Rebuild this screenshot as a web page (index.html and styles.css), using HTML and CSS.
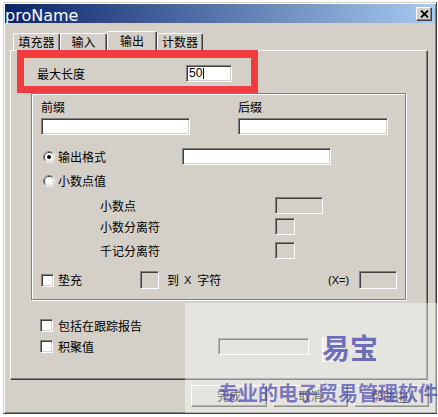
FILE: index.html
```html
<!DOCTYPE html>
<html>
<head>
<meta charset="utf-8">
<link rel="stylesheet" href="styles.css">
</head>
<body>
<div class="window">
  <div class="titlebar">
    <span class="title">proName</span>
    <span class="close"><svg width="9" height="8" viewBox="0 0 9 8"><path d="M1 0.5L8 7.5M8 0.5L1 7.5" stroke="#000" stroke-width="1.8" fill="none"/></svg></span>
  </div>
  <div class="tabs">
    <div class="tab t1">填充器</div>
    <div class="tab t2">输入</div>
    <div class="tab sel">输出</div>
    <div class="tab t4">计数器</div>
  </div>
  <div class="panel">
    <div class="redbox"></div>
    <div class="maxlen"><span class="lbl-max">最大长度</span><span class="input in-max">50<i class="caret"></i></span></div>
    <div class="group">
      <div class="fixes">
        <div class="fix fix1"><div class="fixlbl">前缀</div><div class="input in-fix1"></div></div>
        <div class="fix"><div class="fixlbl">后缀</div><div class="input in-fix2"></div></div>
      </div>
      <div class="radio-row r1">
        <span class="radio-lbl">
          <svg class="radio" viewBox="0 0 12 12" width="12" height="12"><path d="M2.11 9.89A5.5 5.5 0 0 1 9.89 2.11" fill="none" stroke="#808080"/><path d="M9.89 2.11A5.5 5.5 0 0 1 2.11 9.89" fill="none" stroke="#fff"/><path d="M2.82 9.18A4.5 4.5 0 0 1 9.18 2.82" fill="none" stroke="#404040"/><path d="M9.18 2.82A4.5 4.5 0 0 1 2.82 9.18" fill="none" stroke="#d4d0c8"/><circle cx="6" cy="6" r="4" fill="#fff"/><circle cx="6" cy="6" r="2" fill="#000"/></svg>输出格式</span>
        <span class="input in-fmt"></span>
      </div>
      <div class="radio-row r2">
        <span class="radio-lbl">
          <svg class="radio" viewBox="0 0 12 12" width="12" height="12"><path d="M2.11 9.89A5.5 5.5 0 0 1 9.89 2.11" fill="none" stroke="#808080"/><path d="M9.89 2.11A5.5 5.5 0 0 1 2.11 9.89" fill="none" stroke="#fff"/><path d="M2.82 9.18A4.5 4.5 0 0 1 9.18 2.82" fill="none" stroke="#404040"/><path d="M9.18 2.82A4.5 4.5 0 0 1 2.82 9.18" fill="none" stroke="#d4d0c8"/><circle cx="6" cy="6" r="4" fill="#fff"/></svg>小数点值</span>
      </div>
      <div class="sub s1"><span class="sublbl">小数点</span><span class="box b-wide"></span></div>
      <div class="sub s2"><span class="sublbl">小数分离符</span><span class="box b-sq"></span></div>
      <div class="sub s3"><span class="sublbl">千记分离符</span><span class="box b-sq"></span></div>
      <div class="padrow">
        <span class="chk"></span>
        <span class="padlbl">垫充</span>
        <span class="box b-pad"></span>
        <span class="tolbl"><span>到</span><span class="xch">X</span><span class="zf">字符</span></span>
        <span class="xeq">(X=)</span>
        <span class="box b-x"></span>
      </div>
    </div>
    <div class="chkrow c1"><span class="chk"></span><span class="chklbl">包括在跟踪报告</span></div>
    <div class="chkrow c2"><span class="chk"></span><span class="chklbl c2lbl">积聚值</span><span class="box b-dis"></span></div>
  </div>
  <div class="buttons">
    <div class="btn b1">完成</div>
    <div class="btn">取消</div>
    <div class="btn">帮助(<u>H</u>)</div>
  </div>
</div>
<div class="watermark">
  <div class="wm-logo"><span class="wm-btn"></span><span class="wm-big">易宝</span></div>
  <div class="wm-slogan">专业的电子贸易管理软件</div>
</div>
</body>
</html>
```
FILE: styles.css
```css
* { box-sizing: border-box; }
body {
  margin: 0;
  padding: 2px 0 0 3px;
  width: 438px;
  height: 417px;
  background: #fff;
  position: relative;
  overflow: hidden;
  font-family: "Noto Sans CJK SC", sans-serif;
  font-size: 12px;
  color: #000;
}
.window {
  width: 434px;
  height: 412px;
  background: #d4d0c8;
  border: 1px solid;
  border-color: #d4d0c8 #404040 #404040 #d4d0c8;
  box-shadow: inset 1px 1px #fff, inset -1px -1px #808080;
  padding: 1px;
  display: flex;
  flex-direction: column;
}
.titlebar {
  height: 19px;
  flex: none;
  background: linear-gradient(to right, #0a246a, #a6caf0);
  display: flex;
  justify-content: space-between;
  align-items: flex-start;
}
.title {
  font-family: "DejaVu Sans", sans-serif;
  font-size: 16px;
  line-height: 16px;
  color: #fff;
  margin: 4px 0 0 0;
}
.close {
  width: 16px;
  height: 14px;
  margin: 3px 3px 0 0;
  background: #d4d0c8;
  border: 1px solid;
  border-color: #fff #404040 #404040 #fff;
  box-shadow: inset -1px -1px #808080;
  display: flex;
  align-items: center;
  justify-content: center;
}
.tabs {
  display: flex;
  align-items: flex-end;
  height: 20px;
  flex: none;
  margin: 8px 0 -1px 8px;
}
.tab {
  height: 17px;
  margin-bottom: 1px;
  background: #d4d0c8;
  border-top: 1px solid #fff;
  border-left: 1px solid #fff;
  border-right: 1px solid #404040;
  box-shadow: inset -1px 0 #808080;
  border-radius: 2px 2px 0 0;
  text-align: center;
  line-height: 15px;
}
.t1, .t2 { width: 47px; }
.t4 { width: 46px; }
.sel {
  width: 50px;
  height: 20px;
  margin-bottom: 0;
  position: relative;
  z-index: 1;
  line-height: 18px;
}
.panel {
  width: 418px;
  height: 330px;
  flex: none;
  margin-left: 5px;
  position: relative;
  border: 1px solid;
  border-color: #fff #404040 #404040 #fff;
  box-shadow: inset -1px -1px #808080;
  display: flex;
  flex-direction: column;
  align-items: flex-start;
}
.redbox {
  position: absolute;
  left: 6px;
  top: -1px;
  width: 241px;
  height: 43px;
  border: 7px solid #f03c3c;
  border-top-width: 8px;
  z-index: 2;
}
.maxlen {
  margin: 14px 0 0 26px;
  height: 17px;
  display: flex;
  align-items: center;
}
.lbl-max { width: 149px; line-height: 17px; }
.input {
  background: #fff;
  border: 1px solid;
  border-color: #808080 #fff #fff #808080;
  box-shadow: inset 1px 1px #404040, inset -1px -1px #d4d0c8;
}
.in-max {
  width: 46px;
  height: 17px;
  font-family: "Liberation Sans", sans-serif;
  font-size: 12px;
  line-height: 15px;
  padding-left: 2px;
  display: flex;
  align-items: center;
}
.caret {
  display: block;
  width: 1px;
  height: 11px;
  background: #000;
  margin-left: 1px;
}
.group {
  width: 375px;
  height: 207px;
  margin: 11px 0 0 20px;
  border: 1px solid #808080;
  box-shadow: inset 1px 1px #fff, 1px 1px #fff;
  padding-left: 9px;
  display: flex;
  flex-direction: column;
}
.fixes { display: flex; margin-top: 6px; }
.fix { display: flex; flex-direction: column; }
.fix1 { width: 197px; }
.fixlbl { height: 14px; line-height: 14px; }
.in-fix1 { width: 149px; height: 17px; margin-top: 4px; }
.in-fix2 { width: 150px; height: 17px; margin-top: 4px; }
.radio-row { display: flex; align-items: center; height: 17px; }
.r1 { margin-top: 13px; }
.r2 { margin-top: 7px; }
.radio-lbl { width: 141px; display: flex; align-items: center; line-height: 17px; }
.radio { margin: 0 3px 0 2px; flex: none; }
.in-fmt { width: 149px; height: 17px; }
.sub { display: flex; align-items: center; height: 17px; }
.s1 { margin-top: 8px; }
.s2 { margin-top: 4px; }
.s3 { margin-top: 7px; }
.sublbl { width: 234px; padding-left: 59px; line-height: 17px; }
.box {
  height: 17px;
  background: #d4d0c8;
  border: 1px solid;
  border-color: #808080 #fff #fff #808080;
  box-shadow: inset 1px 1px #404040, inset -1px -1px #d4d0c8;
  flex: none;
}
.b-wide { width: 48px; }
.b-sq { width: 20px; }
.padrow { margin-top: 12px; height: 18px; display: flex; align-items: center; }
.chk {
  width: 13px;
  height: 13px;
  background: #fff;
  border: 1px solid;
  border-color: #808080 #fff #fff #808080;
  box-shadow: inset 1px 1px #404040, inset -1px -1px #d4d0c8;
  flex: none;
}
.padlbl { margin-left: 4px; width: 82px; line-height: 18px; }
.b-pad { width: 19px; height: 18px; }
.tolbl { margin-left: 8px; width: 161px; display: flex; align-items: center; line-height: 18px; }
.xch { font-family: "Liberation Sans", sans-serif; font-size: 11px; margin-left: 5px; }
.zf { margin-left: 6px; }
.xeq { width: 31px; font-family: "Liberation Sans", sans-serif; font-size: 11px; line-height: 18px; }
.b-x { width: 38px; height: 18px; }
.chkrow { display: flex; align-items: center; margin-left: 29px; }
.c1 { margin-top: 18px; height: 15px; }
.c2 { margin-top: 5px; height: 17px; }
.chklbl { margin-left: 5px; line-height: 15px; }
.c2lbl { width: 160px; }
.b-dis { width: 91px; height: 17px; }
.buttons {
  display: flex;
  justify-content: flex-end;
  gap: 6px;
  margin: 5px 6px 0 0;
}
.btn {
  width: 75px;
  height: 22px;
  background: #d4d0c8;
  border: 1px solid;
  border-color: #fff #404040 #404040 #fff;
  box-shadow: inset -1px -1px #808080;
  display: flex;
  align-items: center;
  justify-content: center;
  line-height: 20px;
}
.b1 { width: 76px; }
.watermark {
  position: absolute;
  left: 185px;
  top: 303px;
  width: 252px;
  height: 110px;
  background: rgba(255, 255, 255, 0.42);
  z-index: 3;
  display: flex;
  flex-direction: column;
  align-items: flex-start;
}
.wm-logo { margin: 30px 0 0 137px; position: relative; display: flex; }
.wm-btn {
  position: absolute;
  left: 0;
  top: 5px;
  width: 23px;
  height: 24px;
  border-top: 1px solid #fff;
  border-left: 1px solid #fff;
  background: rgba(255, 255, 255, 0.35);
}
.wm-big {
  position: relative;
  font-size: 28px;
  font-weight: bold;
  line-height: 28px;
  color: rgba(60, 62, 170, 0.72);
}
.wm-slogan {
  margin: 21px 0 0 33px;
  font-size: 20px;
  font-weight: bold;
  line-height: 22px;
  white-space: nowrap;
  color: rgba(60, 62, 170, 0.66);
}
```
